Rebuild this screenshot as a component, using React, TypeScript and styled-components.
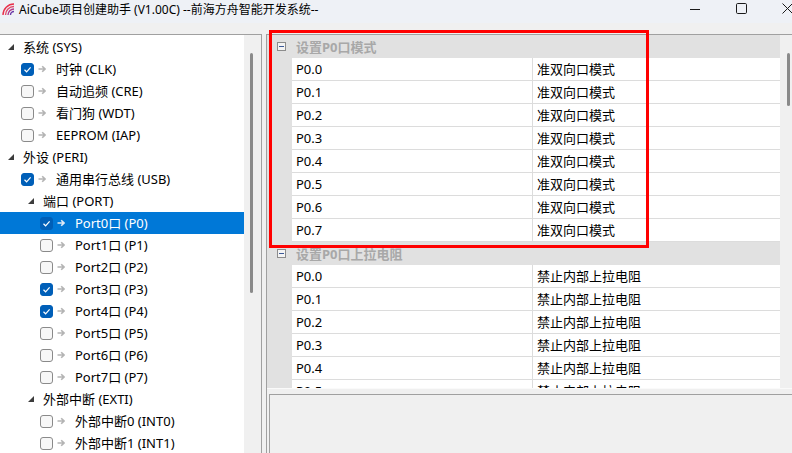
import React from 'react';
import styled, { createGlobalStyle } from 'styled-components';

const GlobalStyle = createGlobalStyle`
  html, body { margin: 0; padding: 0; background: #f0f0f0; }
  body { font-family: "Noto Sans", "Noto Sans CJK SC", sans-serif; }
`;

type TreeNode = {
  label: string;
  level: number;
  kind: 'cat' | 'item';
  checked?: boolean;
  selected?: boolean;
};

const treeItems: TreeNode[] = [
  { label: '系统 (SYS)', level: 0, kind: 'cat' },
  { label: '时钟 (CLK)', level: 1, kind: 'item', checked: true },
  { label: '自动追频 (CRE)', level: 1, kind: 'item' },
  { label: '看门狗 (WDT)', level: 1, kind: 'item' },
  { label: 'EEPROM (IAP)', level: 1, kind: 'item' },
  { label: '外设 (PERI)', level: 0, kind: 'cat' },
  { label: '通用串行总线 (USB)', level: 1, kind: 'item', checked: true },
  { label: '端口 (PORT)', level: 1, kind: 'cat' },
  { label: 'Port0口 (P0)', level: 2, kind: 'item', checked: true, selected: true },
  { label: 'Port1口 (P1)', level: 2, kind: 'item' },
  { label: 'Port2口 (P2)', level: 2, kind: 'item' },
  { label: 'Port3口 (P3)', level: 2, kind: 'item', checked: true },
  { label: 'Port4口 (P4)', level: 2, kind: 'item', checked: true },
  { label: 'Port5口 (P5)', level: 2, kind: 'item' },
  { label: 'Port6口 (P6)', level: 2, kind: 'item' },
  { label: 'Port7口 (P7)', level: 2, kind: 'item' },
  { label: '外部中断 (EXTI)', level: 1, kind: 'cat' },
  { label: '外部中断0 (INT0)', level: 2, kind: 'item' },
  { label: '外部中断1 (INT1)', level: 2, kind: 'item' },
];

const pins = ['P0.0', 'P0.1', 'P0.2', 'P0.3', 'P0.4', 'P0.5', 'P0.6', 'P0.7'];

// the second group only shows down to P0.5 before the grid is cut off
const sections = [
  { title: '设置P0口模式', value: '准双向口模式', rows: pins },
  { title: '设置P0口上拉电阻', value: '禁止内部上拉电阻', rows: pins.slice(0, 6) },
];

const Window = styled.div`
  position: relative;
  width: 792px;
  height: 453px;
  overflow: hidden;
  display: flex;
  flex-direction: column;
  background: #f0f0f0;
  font-size: 13px;
  color: #000;
`;

const TitleBar = styled.div`
  height: 23px;
  flex: none;
  display: flex;
  align-items: flex-start;
  background: #eef1f6;
`;

const AppIcon = styled.div`
  width: 13px;
  height: 13px;
  margin: 3px 4px 0 2px;
  display: flex;
`;

const TitleText = styled.div`
  flex: 1;
  font-size: 12px;
  line-height: 16px;
  padding-top: 2px;
  white-space: nowrap;
`;

const Controls = styled.div`
  display: flex;
  margin-right: -18px;
`;

const ControlButton = styled.div`
  width: 46px;
  height: 17px;
  display: flex;
  align-items: center;
  justify-content: center;
`;

const Body = styled.div`
  flex: 1;
  min-height: 0;
  display: flex;
  gap: 4px;
  padding-top: 11px;
`;

const LeftPane = styled.div`
  width: 262px;
  box-sizing: border-box;
  flex: none;
  display: flex;
  background: #fff;
  border-top: 1px solid #a0a0a0;
  border-right: 1px solid #a0a0a0;
`;

const Tree = styled.div`
  flex: 1;
  padding-top: 1px;
  overflow: hidden;
`;

const TreeRow = styled.div<{ $indent: number; $selected?: boolean }>`
  height: 22px;
  display: flex;
  align-items: center;
  padding-left: ${(p) => p.$indent}px;
  background: ${(p) => (p.$selected ? '#0078d7' : 'transparent')};
  color: ${(p) => (p.$selected ? '#fff' : '#000')};
  white-space: nowrap;
`;

const Expander = styled.div`
  width: 6px;
  height: 6px;
  margin-right: 9px;
  display: flex;
`;

const CheckBox = styled.div<{ $checked?: boolean }>`
  width: 13px;
  height: 13px;
  box-sizing: border-box;
  border-radius: 3px;
  border: 1px solid ${(p) => (p.$checked ? '#005fb8' : '#8a8a8a')};
  background: ${(p) => (p.$checked ? '#005fb8' : '#f7f7f7')};
  display: flex;
  align-items: center;
  justify-content: center;
  margin-right: 4px;
`;

const Arrow = styled.div`
  width: 8px;
  height: 8px;
  margin-right: 10px;
  display: flex;
`;

const Label = styled.span`
  line-height: 22px;
`;

const ScrollTrack = styled.div<{ $width: number; $thumbTop: number; $thumbLeft: number }>`
  width: ${(p) => p.$width}px;
  flex: none;
  background: #f0f0f0;
  padding-top: ${(p) => p.$thumbTop}px;
  padding-left: ${(p) => p.$thumbLeft}px;
  box-sizing: border-box;
`;

const Thumb = styled.div<{ $height: number }>`
  width: 3px;
  height: ${(p) => p.$height}px;
  border-radius: 2px;
  background: #8a8a8a;
`;

const RightPane = styled.div`
  flex: 1;
  min-width: 0;
  display: flex;
  flex-direction: column;
  border-top: 1px solid #a0a0a0;
  border-left: 1px solid #a0a0a0;
`;

const GridArea = styled.div`
  height: 353px;
  flex: none;
  display: flex;
`;

const Grid = styled.div`
  flex: 1;
  overflow: hidden;
  background: #e1e1e1;
`;

const SectionHeader = styled.div`
  height: 23px;
  display: flex;
  align-items: center;
  padding-left: 10px;
  background: #e1e1e1;
  font-size: 13px;
  font-weight: bold;
  color: #a8a8a8;
`;

const Collapse = styled.div`
  width: 9px;
  height: 9px;
  box-sizing: border-box;
  border: 1px solid #8c8c8c;
  background: #f4f4f4;
  margin-right: 10px;
  display: flex;
  align-items: center;
  justify-content: center;
  &::after {
    content: '';
    width: 5px;
    height: 1px;
    background: #3d5a98;
  }
`;

const GridRow = styled.div`
  height: 23px;
  display: flex;
`;

const MarginCell = styled.div`
  width: 25px;
  flex: none;
  background: #e1e1e1;
`;

const Cell = styled.div<{ $name?: boolean }>`
  box-sizing: border-box;
  background: #fff;
  border-bottom: 1px solid #dcdcdc;
  padding-left: 4px;
  line-height: 22px;
  white-space: nowrap;
  ${(p) => (p.$name ? 'width: 241px; flex: none; border-right: 1px solid #dcdcdc;' : 'flex: 1;')}
`;

const DescPanel = styled.div`
  flex: 1;
  display: flex;
  padding: 5px 0 0 2px;
  border-top: 1px solid #fafafa;
`;

const DescBox = styled.div`
  flex: 1;
  border-top: 1px solid #a0a0a0;
  border-left: 1px solid #a0a0a0;
  background: #f0f0f0;
`;

const Highlight = styled.div`
  position: absolute;
  left: 269px;
  top: 30px;
  width: 380px;
  height: 218px;
  box-sizing: border-box;
  border: 3px solid #ff0000;
  pointer-events: none;
`;

const TitleLogo = () => (
  <svg width="13" height="13" viewBox="0 0 13 13">
    <path d="M1 12 A11 11 0 0 1 12 1" fill="none" stroke="#e8304a" strokeWidth="1.4" />
    <path d="M3.5 12 A8.5 8.5 0 0 1 12 3.5" fill="none" stroke="#e24a6a" strokeWidth="1.4" />
    <path d="M6 12 A6 6 0 0 1 12 6" fill="none" stroke="#b03c8c" strokeWidth="1.4" />
    <path d="M8.5 12 A3.5 3.5 0 0 1 12 8.5" fill="none" stroke="#6a3aa8" strokeWidth="1.4" />
  </svg>
);

const ExpandGlyph = () => (
  <svg width="6" height="6" viewBox="0 0 6 6">
    <polygon points="6,0 6,6 0,6" fill="#3c3c3c" />
  </svg>
);

const CheckMark = () => (
  <svg width="11" height="11" viewBox="0 0 11 11">
    <path d="M2.5 5.8 L4.6 7.8 L8.6 3.4" fill="none" stroke="#fff" strokeWidth="1.2" />
  </svg>
);

const RightArrow = ({ color }: { color: string }) => (
  <svg width="8" height="8" viewBox="0 0 8 8">
    <path d="M0.5 4 H7 M4.2 1.2 L7 4 L4.2 6.8" fill="none" stroke={color} strokeWidth="1.6" />
  </svg>
);

const TreeLine = ({ node }: { node: TreeNode }) => {
  if (node.kind === 'cat') {
    return (
      <TreeRow $indent={8 + node.level * 20}>
        <Expander><ExpandGlyph /></Expander>
        <Label>{node.label}</Label>
      </TreeRow>
    );
  }
  return (
    <TreeRow $indent={21 + (node.level - 1) * 19} $selected={node.selected}>
      <CheckBox $checked={node.checked}>{node.checked && <CheckMark />}</CheckBox>
      <Arrow><RightArrow color={node.selected ? '#dfe9f5' : '#b4b4b4'} /></Arrow>
      <Label>{node.label}</Label>
    </TreeRow>
  );
};

export default function App() {
  return (
    <Window>
      <GlobalStyle />
      <TitleBar>
        <AppIcon><TitleLogo /></AppIcon>
        <TitleText>AiCube项目创建助手 (V1.00C) --前海方舟智能开发系统--</TitleText>
        <Controls>
          <ControlButton>
            <svg width="10" height="10" viewBox="0 0 10 10"><path d="M0 5.5 H10" stroke="#1a1a1a" strokeWidth="1" /></svg>
          </ControlButton>
          <ControlButton>
            <svg width="11" height="11" viewBox="0 0 11 11"><rect x="0.5" y="0.5" width="10" height="10" rx="1.2" fill="none" stroke="#1a1a1a" strokeWidth="1" /></svg>
          </ControlButton>
          <ControlButton>
            <svg width="11" height="11" viewBox="0 0 11 11"><path d="M0.5 0.5 L10.5 10.5 M10.5 0.5 L0.5 10.5" stroke="#1a1a1a" strokeWidth="1" /></svg>
          </ControlButton>
        </Controls>
      </TitleBar>
      <Body>
        <LeftPane>
          <Tree>
            {treeItems.map((n) => <TreeLine key={n.label} node={n} />)}
          </Tree>
          <ScrollTrack $width={17} $thumbTop={18} $thumbLeft={6}>
            <Thumb $height={240} />
          </ScrollTrack>
        </LeftPane>
        <RightPane>
          <GridArea>
            <Grid>
              {sections.map((s) => (
                <React.Fragment key={s.title}>
                  <SectionHeader>
                    <Collapse />
                    {s.title}
                  </SectionHeader>
                  {s.rows.map((p) => (
                    <GridRow key={p}>
                      <MarginCell />
                      <Cell $name>{p}</Cell>
                      <Cell>{s.value}</Cell>
                    </GridRow>
                  ))}
                </React.Fragment>
              ))}
            </Grid>
            <ScrollTrack $width={12} $thumbTop={18} $thumbLeft={7}>
              <Thumb $height={53} />
            </ScrollTrack>
          </GridArea>
          <DescPanel>
            <DescBox />
          </DescPanel>
        </RightPane>
      </Body>
      <Highlight />
    </Window>
  );
}
